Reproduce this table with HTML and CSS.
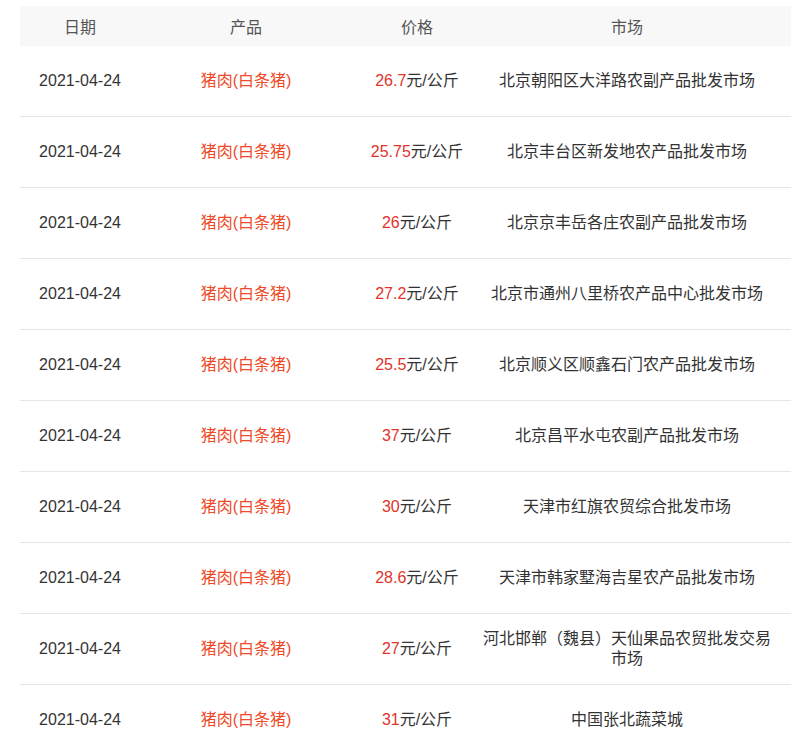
FILE: index.html
```html
<!DOCTYPE html>
<html lang="zh">
<head>
<meta charset="utf-8">
<title>价格行情</title>
<link rel="stylesheet" href="styles.css">
</head>
<body>
<table class="price-table">
  <colgroup>
    <col class="c-date"><col class="c-prod"><col class="c-price"><col class="c-market">
  </colgroup>
  <thead>
    <tr><th>日期</th><th>产品</th><th>价格</th><th class="market">市场</th></tr>
  </thead>
  <tbody>
    <tr><td>2021-04-24</td><td class="prod">猪肉(白条猪)</td><td><span class="num">26.7</span>元/公斤</td><td class="market">北京朝阳区大洋路农副产品批发市场</td></tr>
    <tr><td>2021-04-24</td><td class="prod">猪肉(白条猪)</td><td><span class="num">25.75</span>元/公斤</td><td class="market">北京丰台区新发地农产品批发市场</td></tr>
    <tr><td>2021-04-24</td><td class="prod">猪肉(白条猪)</td><td><span class="num">26</span>元/公斤</td><td class="market">北京京丰岳各庄农副产品批发市场</td></tr>
    <tr><td>2021-04-24</td><td class="prod">猪肉(白条猪)</td><td><span class="num">27.2</span>元/公斤</td><td class="market">北京市通州八里桥农产品中心批发市场</td></tr>
    <tr><td>2021-04-24</td><td class="prod">猪肉(白条猪)</td><td><span class="num">25.5</span>元/公斤</td><td class="market">北京顺义区顺鑫石门农产品批发市场</td></tr>
    <tr><td>2021-04-24</td><td class="prod">猪肉(白条猪)</td><td><span class="num">37</span>元/公斤</td><td class="market">北京昌平水屯农副产品批发市场</td></tr>
    <tr><td>2021-04-24</td><td class="prod">猪肉(白条猪)</td><td><span class="num">30</span>元/公斤</td><td class="market">天津市红旗农贸综合批发市场</td></tr>
    <tr><td>2021-04-24</td><td class="prod">猪肉(白条猪)</td><td><span class="num">28.6</span>元/公斤</td><td class="market">天津市韩家墅海吉星农产品批发市场</td></tr>
    <tr><td>2021-04-24</td><td class="prod">猪肉(白条猪)</td><td><span class="num">27</span>元/公斤</td><td class="market">河北邯郸（魏县）天仙果品农贸批发交易市场</td></tr>
    <tr><td>2021-04-24</td><td class="prod">猪肉(白条猪)</td><td><span class="num">31</span>元/公斤</td><td class="market">中国张北蔬菜城</td></tr>
  </tbody>
</table>
</body>
</html>
```
FILE: styles.css
```css
html, body {
  margin: 0;
  padding: 0;
  background: #fff;
  overflow: hidden;
}
body {
  padding: 6px 0 0 20px;
  font-family: "Liberation Sans", "Noto Sans CJK SC", sans-serif;
  font-size: 16px;
  color: #333;
}
.price-table {
  border-collapse: collapse;
  table-layout: fixed;
  width: 771px;
}
.c-date { width: 120px; }
.c-prod { width: 212px; }
.c-price { width: 130px; }
.c-market { width: 309px; }
.price-table th {
  height: 40px;
  padding: 0;
  background: #f8f8f8;
  font-weight: normal;
  color: #555;
  text-align: center;
}
.price-table td {
  height: 70px;
  padding: 0;
  text-align: center;
  border-bottom: 1px solid #e6e6e6;
  line-height: 20px;
}
.price-table .market {
  padding-right: 19px;
}
.prod {
  color: #ee4a27;
}
.num {
  color: #e0342a;
}
```
